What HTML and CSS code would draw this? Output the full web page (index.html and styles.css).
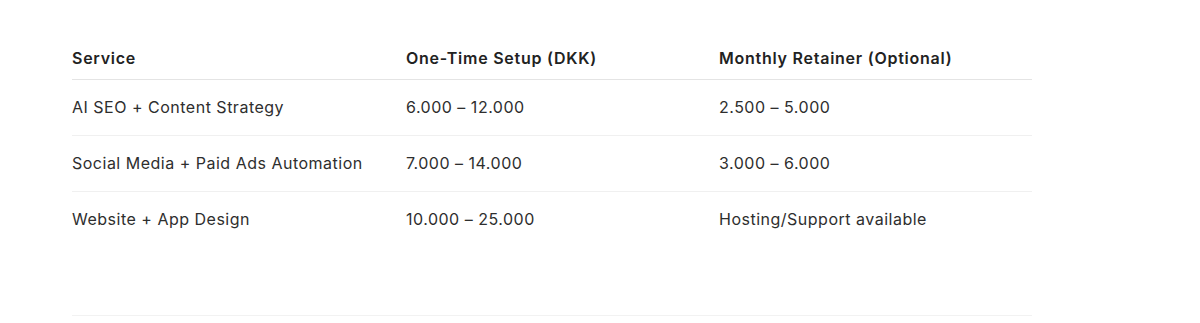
FILE: index.html
```html
<!DOCTYPE html>
<html lang="en">
<head>
<meta charset="utf-8">
<title>Pricing</title>
<link rel="stylesheet" href="styles.css">
</head>
<body>
<main class="page">
  <div class="table">
    <div class="row head">
      <div class="cell">Service</div>
      <div class="cell">One-Time Setup (DKK)</div>
      <div class="cell">Monthly Retainer (Optional)</div>
    </div>
    <div class="row">
      <div class="cell">AI SEO + Content Strategy</div>
      <div class="cell">6.000 – 12.000</div>
      <div class="cell">2.500 – 5.000</div>
    </div>
    <div class="row">
      <div class="cell">Social Media + Paid Ads Automation</div>
      <div class="cell">7.000 – 14.000</div>
      <div class="cell">3.000 – 6.000</div>
    </div>
    <div class="row last">
      <div class="cell">Website + App Design</div>
      <div class="cell">10.000 – 25.000</div>
      <div class="cell">Hosting/Support available</div>
    </div>
  </div>
  <hr class="rule">
</main>
</body>
</html>
```
FILE: styles.css
```css
html, body {
  margin: 0;
  padding: 0;
  background: #ffffff;
}
body {
  font-family: Inter, "Liberation Sans", Arial, sans-serif;
  font-size: 16px;
  letter-spacing: 0.5px;
  color: #2e2e2e;
}
.page {
  width: 960px;
  padding: 39px 0 0 72px;
}
.table {
  display: flex;
  flex-direction: column;
}
.row {
  display: grid;
  grid-template-columns: 334px 313px 313px;
  height: 56px;
  align-items: center;
  border-bottom: 1px solid #f0f0f0;
  box-sizing: border-box;
}
.cell {
  padding-bottom: 2px;
}
.row.head {
  height: 41px;
  font-weight: 600;
  letter-spacing: 0.75px;
  color: #222222;
  border-bottom: 1px solid #e4e4e4;
}
.row.last {
  border-bottom: none;
}
.rule {
  margin: 67px 0 0 0;
  border: 0;
  border-top: 1px solid #f2f2f2;
  height: 0;
}
```
